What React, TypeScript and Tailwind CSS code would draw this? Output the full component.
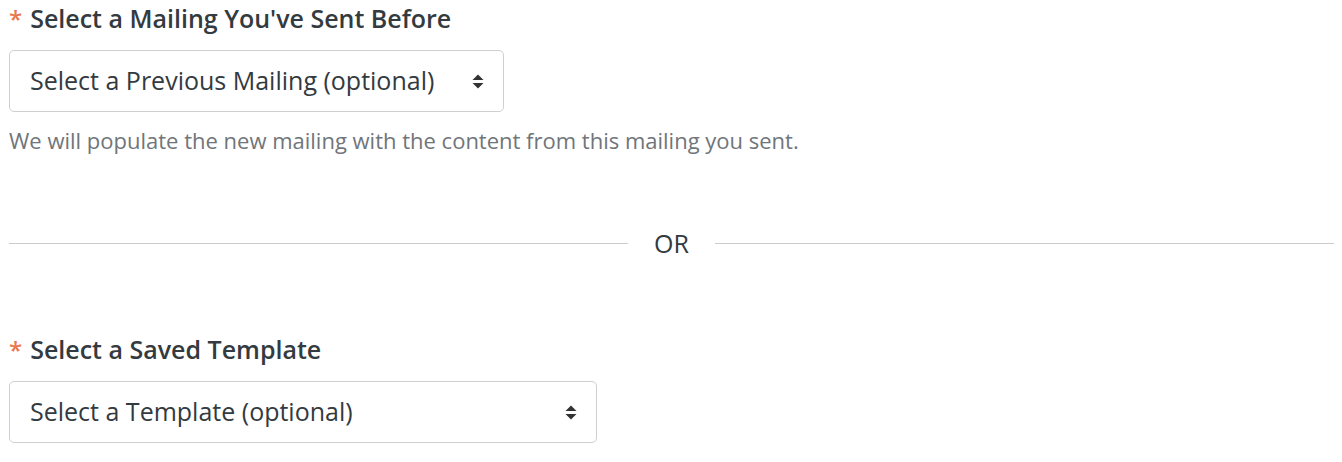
import React from "react";

const Arrows = () => (
  <svg width="12" height="15" viewBox="0 0 12 15" className="shrink-0">
    <path d="M6 0.5 L11.5 6 L0.5 6 Z" fill="#333" />
    <path d="M6 14.5 L11.5 9 L0.5 9 Z" fill="#333" />
  </svg>
);

const Label = ({ children }: { children: React.ReactNode }) => (
  <div className="flex items-baseline text-[25px] leading-[34px] font-semibold text-[#333a40]">
    <span className="text-[#e9774f] mr-[8px] text-[24px]">*</span>
    <span>{children}</span>
  </div>
);

const Select = ({ text, width }: { text: string; width: string }) => (
  <div
    className={`${width} h-[62px] border border-[#cfcfcf] rounded-[5px] bg-white flex items-center justify-between pl-[20px] pr-[19px] text-[25px] text-[#333a40]`}
  >
    <span>{text}</span>
    <Arrows />
  </div>
);

export default function App() {
  return (
    <div
      className="w-[1342px] h-[462px] bg-white pl-[9px] pr-[8px] pt-[1px]"
      style={{ fontFamily: '"Open Sans", sans-serif' }}
    >
      <Label>Select a Mailing You've Sent Before</Label>
      <div className="mt-[14px]">
        <Select text="Select a Previous Mailing (optional)" width="w-[495px]" />
      </div>
      <p className="mt-[13px] text-[22px] leading-[30px] text-[#70757a]">
        We will populate the new mailing with the content from this mailing you sent.
      </p>
      <div className="mt-[71px] flex items-center gap-[26px]">
        <div className="flex-1 h-px bg-[#cccccc]" />
        <span className="text-[25px] leading-[34px] text-[#333a40]">OR</span>
        <div className="flex-1 h-px bg-[#cccccc]" />
      </div>
      <div className="mt-[72px]">
        <Label>Select a Saved Template</Label>
      </div>
      <div className="mt-[14px]">
        <Select text="Select a Template (optional)" width="w-[588px]" />
      </div>
    </div>
  );
}
